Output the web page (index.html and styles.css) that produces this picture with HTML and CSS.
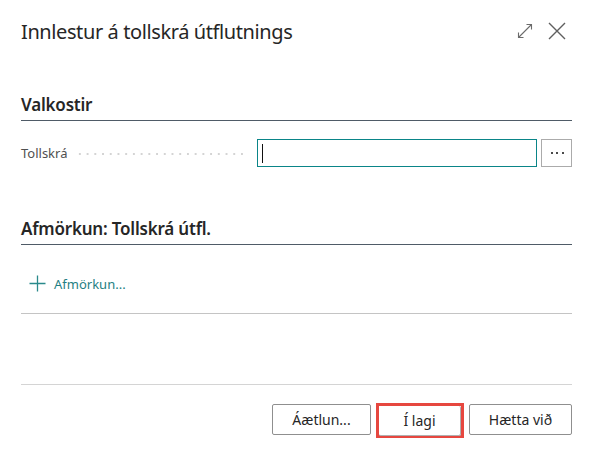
FILE: index.html
```html
<!DOCTYPE html>
<html lang="is">
<head>
<meta charset="utf-8">
<title>Innlestur á tollskrá útflutnings</title>
<link rel="stylesheet" href="styles.css">
</head>
<body>
<div class="dialog">
  <header class="titlebar">
    <h1 class="title">Innlestur á tollskrá útflutnings</h1>
    <div class="title-actions">
      <button class="icon-btn" aria-label="Stækka">
        <svg width="16" height="16" viewBox="0 0 16 16" fill="none" stroke="#6b6b6b" stroke-width="1.1">
          <path d="M1.5 14.5 L14.5 1.5"/>
          <path d="M9.5 1.5 H14.5 V6.5"/>
          <path d="M1.5 9.5 V14.5 H6.5"/>
        </svg>
      </button>
      <button class="icon-btn" aria-label="Loka">
        <svg width="18" height="18" viewBox="0 0 18 18" fill="none" stroke="#5f5f5f" stroke-width="1.4">
          <path d="M1 1 L17 17 M17 1 L1 17"/>
        </svg>
      </button>
    </div>
  </header>

  <section class="group group-options">
    <h2 class="group-title">Valkostir</h2>
    <div class="field">
      <label class="field-label" for="tollskra">Tollskrá</label>
      <span class="leader"></span>
      <div class="field-input">
        <input id="tollskra" class="input" type="text">
        <span class="caret"></span>
      </div>
      <button class="lookup" aria-label="Fletta upp">
        <svg width="14" height="4" viewBox="0 0 14 4">
          <rect x="1" y="1" width="2" height="2" fill="#4a4a4a"/>
          <rect x="6" y="1" width="2" height="2" fill="#4a4a4a"/>
          <rect x="12" y="1" width="2" height="2" fill="#4a4a4a"/>
        </svg>
      </button>
    </div>
  </section>

  <section class="group group-filter">
    <h2 class="group-title">Afmörkun: Tollskrá útfl.</h2>
    <button class="add-filter">
      <svg width="17" height="17" viewBox="0 0 17 17" fill="none" stroke="#2a8a8c" stroke-width="1.3">
        <path d="M8.5 0.5 V16.5 M0.5 8.5 H16.5"/>
      </svg>
      <span>Afmörkun...</span>
    </button>
    <div class="rule"></div>
  </section>

  <footer class="footer">
    <button class="btn">Áætlun...</button>
    <span class="focus-mark"><button class="btn btn-ok">Í lagi</button></span>
    <button class="btn">Hætta við</button>
  </footer>
</div>
</body>
</html>
```

FILE: styles.css
```css
* { box-sizing: border-box; }

html, body {
  margin: 0;
  padding: 0;
  background: #ffffff;
}

body {
  font-family: "Noto Sans", "Open Sans", "Liberation Sans", sans-serif;
  color: #212121;
}

button {
  font-family: inherit;
  background: none;
  border: none;
  padding: 0;
  cursor: pointer;
}

.dialog {
  width: 596px;
  height: 457px;
  padding: 0 24px 0 21px;
  display: flex;
  flex-direction: column;
}

.titlebar {
  height: 62px;
  flex: 0 0 62px;
  display: flex;
  align-items: center;
  justify-content: space-between;
}

.title {
  margin: 0;
  font-size: 20px;
  letter-spacing: -0.4px;
  font-weight: 400;
  color: #262626;
}

.title-actions {
  display: flex;
  align-items: center;
  gap: 15px;
  margin-right: 6px;
}

.icon-btn {
  display: flex;
  align-items: center;
  justify-content: center;
}

.group-title {
  margin: 0;
  font-size: 17px;
  line-height: 24px;
  letter-spacing: -0.2px;
  font-weight: 600;
  color: #262626;
  border-bottom: 1px solid #4f5b67;
  padding-bottom: 3px;
}

.group-options {
  margin-top: 31px;
}

.field {
  display: flex;
  align-items: center;
  margin-top: 18px;
  height: 28px;
}

.field-label {
  font-size: 13px;
  color: #505050;
}

.leader {
  flex: 0 0 172px;
  height: 2px;
  margin-left: auto;
  margin-right: 9px;
  margin-top: 2px;
  background-image: radial-gradient(circle, #d4d4d4 1px, transparent 1.2px);
  background-size: 7.73px 2px;
}

.field-input {
  position: relative;
  width: 280px;
  height: 28px;
}

.input {
  width: 100%;
  height: 100%;
  border: 1px solid #0a8588;
  outline: none;
  padding: 0 6px;
  font-family: inherit;
  font-size: 14px;
}

.caret {
  position: absolute;
  left: 5px;
  top: 5px;
  width: 1px;
  height: 19px;
  background: #111;
}

.lookup {
  width: 31px;
  height: 28px;
  margin-left: 4px;
  border: 1px solid #ababab;
  display: flex;
  align-items: center;
  justify-content: center;
}

.group-filter {
  margin-top: 50px;
}

.add-filter {
  display: flex;
  align-items: center;
  gap: 8px;
  margin-top: 30px;
  margin-left: 8px;
  color: #1f7f83;
  font-size: 13px;
  height: 17px;
}

.rule {
  margin-top: 21px;
  height: 1px;
  background: #c4c4c4;
}

.footer {
  margin-top: auto;
  margin-bottom: 19px;
  border-top: 1px solid #d4d4d4;
  padding-top: 18px;
  display: flex;
  justify-content: flex-end;
  align-items: flex-start;
  gap: 5px;
}

.btn {
  height: 31px;
  padding: 0 14px;
  border: 1px solid #8f8f8f;
  border-radius: 2px;
  font-size: 14px;
  color: #262626;
  background: #fff;
  margin-top: 1px;
}

.btn:first-child { width: 99px; }
.btn:last-child { width: 103px; }

.focus-mark {
  display: flex;
  width: 88px;
  height: 35px;
  border: 3px solid #e6473f;
}

.btn-ok {
  width: 100%;
  height: 30px;
  margin: 0;
  border-color: #b0b0b0;
  border-top: none;
  border-left: none;
}
```
